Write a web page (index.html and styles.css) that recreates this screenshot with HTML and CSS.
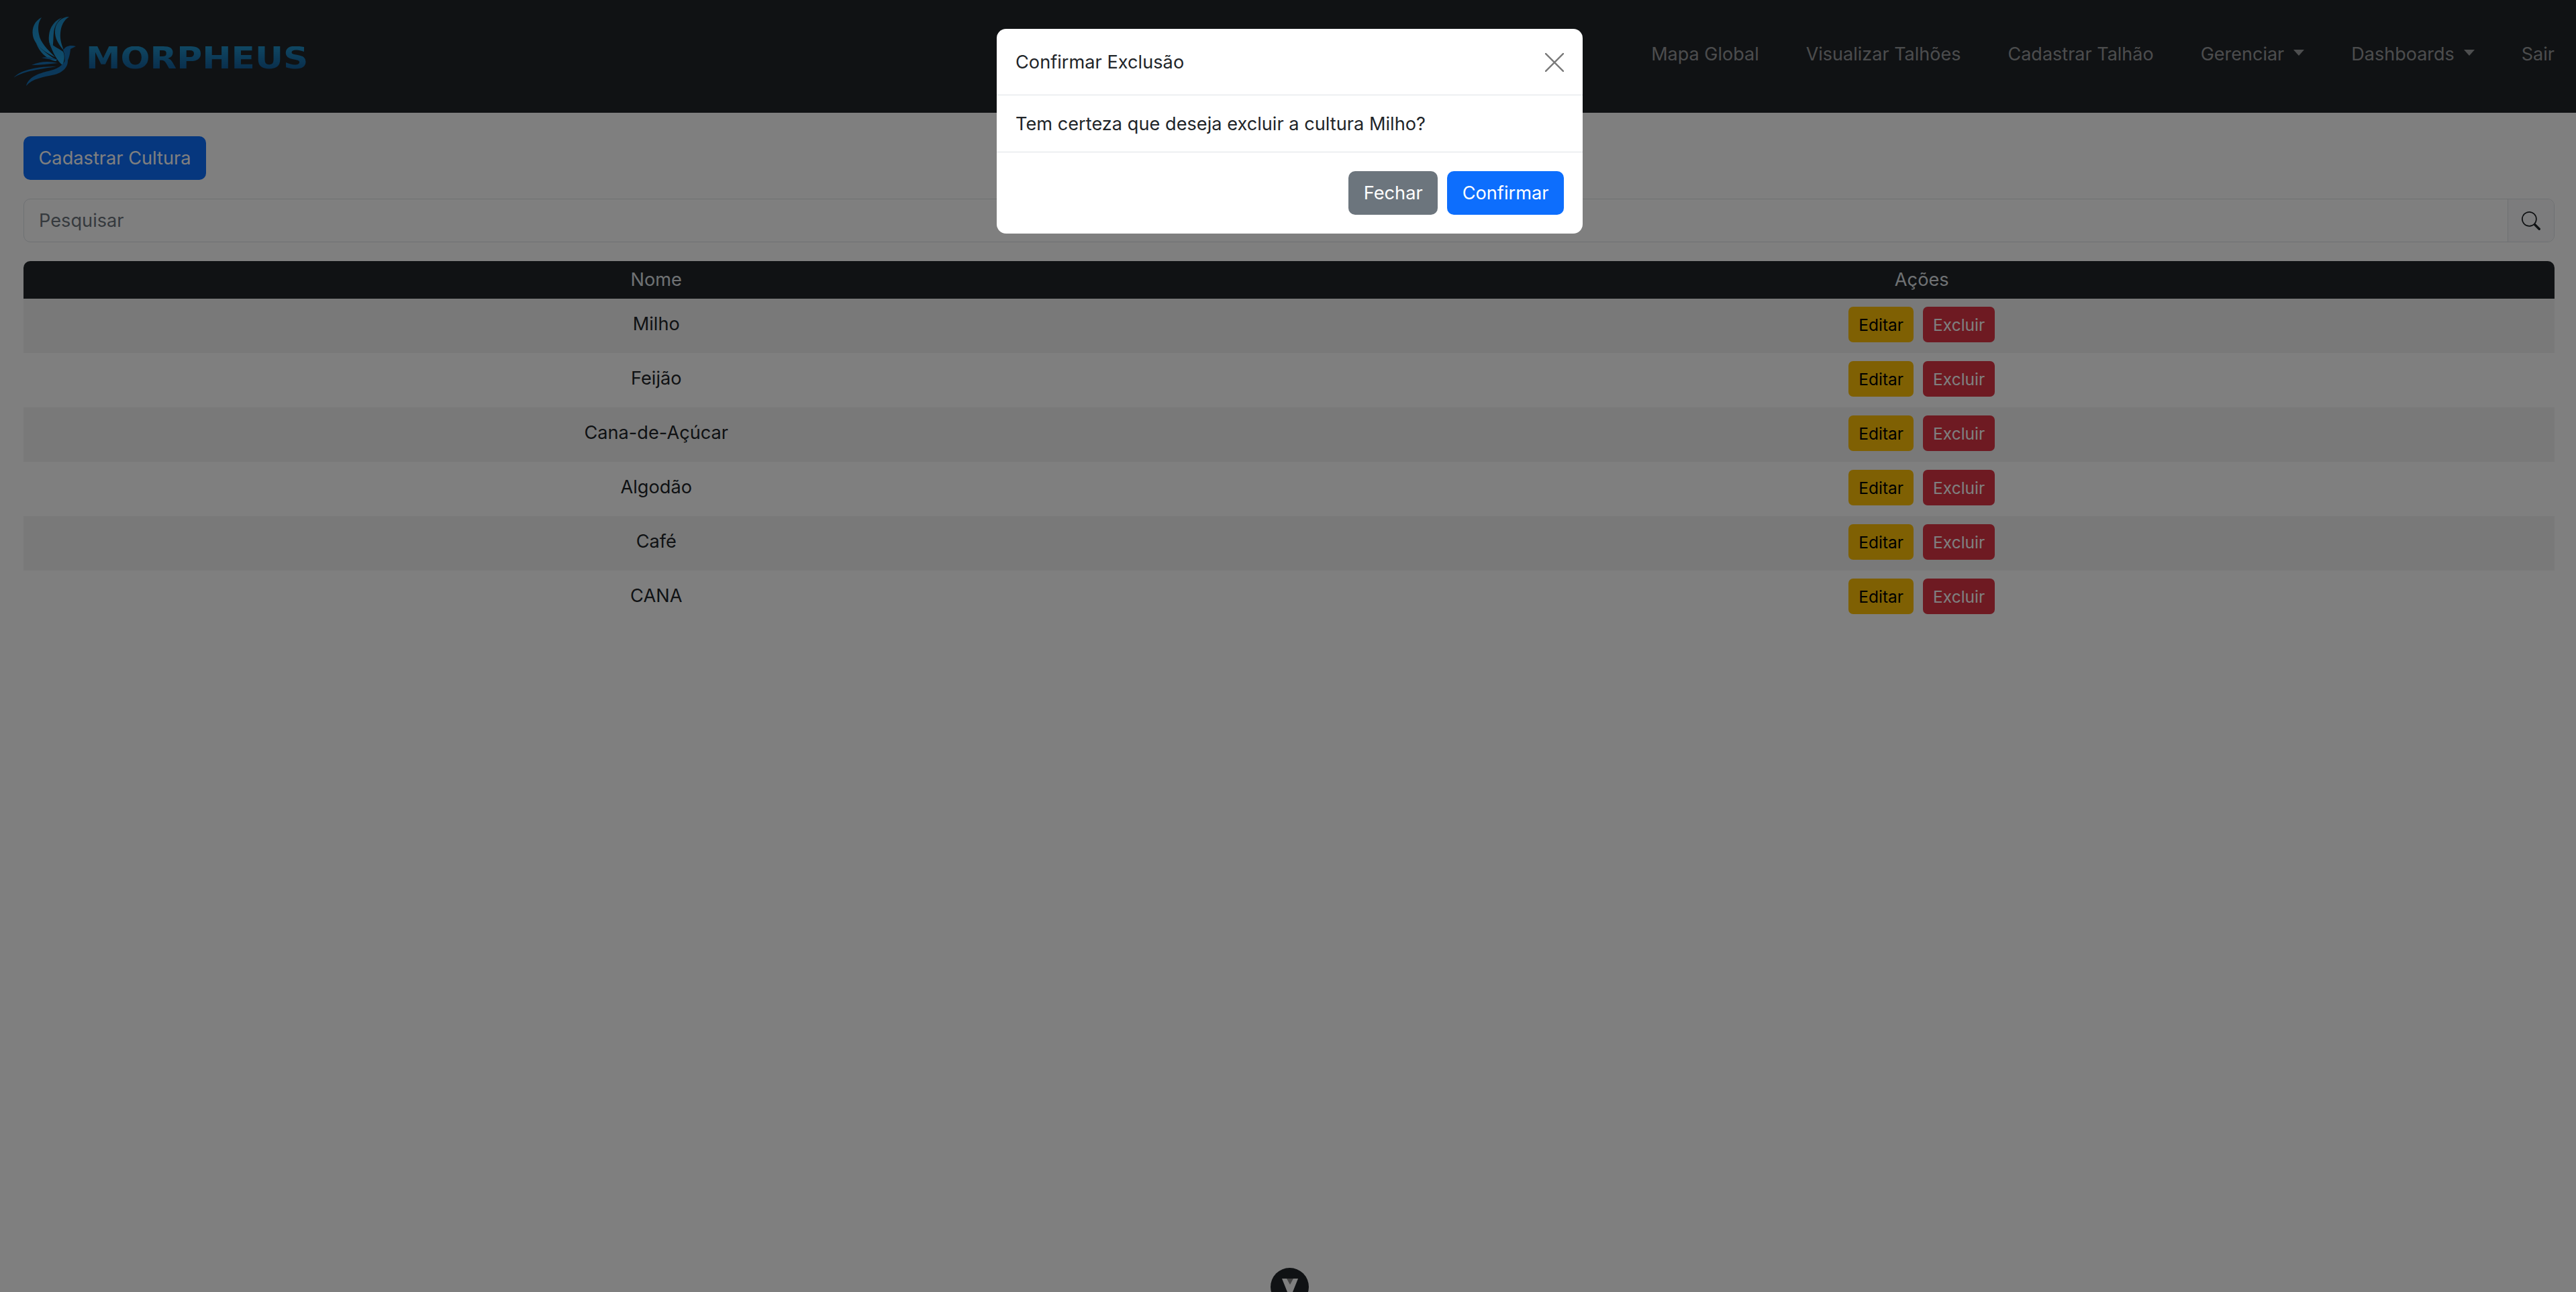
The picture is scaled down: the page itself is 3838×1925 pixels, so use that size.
FILE: index.html
```html
<!DOCTYPE html>
<html lang="pt-BR">
<head>
    <meta charset="UTF-8" />
    <title>Culturas</title>
    <link rel="stylesheet" href="styles.css">
</head>
<body>
    <nav class="navbar">
        <a class="brand" href="#">
            <svg class="brand-bird" viewBox="0 0 100 106" width="100" height="106">
                <defs>
                    <linearGradient id="birdLight" x1="0" y1="0" x2="0" y2="1">
                        <stop offset="0" stop-color="#1c8cc8" />
                        <stop offset="1" stop-color="#1f9fe0" />
                    </linearGradient>
                </defs>
                <g fill="url(#birdLight)">
                    <path d="M42 1 C32 6 27 16 29 28 C31 40 44 52 62 60 C50 48 40 38 38 26 C36 16 37 8 42 1 Z" />
                    <path d="M33 36 C38 46 50 56 64 64 C66 67 60 66 56 64 C44 58 36 48 33 36 Z" />
                    <path d="M83 0 C72 0 63 8 62 20 C61 32 68 42 75 50 C72 42 69 34 70 24 C71 13 75 5 83 0 Z" />
                    <path d="M73 1 C62 5 54 15 53 28 C52 36 54 42 58 48 C60 38 59 26 61 18 C63 11 67 5 73 1 Z" />
                    <path d="M53 36 C58 44 66 46 74 52 C77 58 76 66 73 72 C66 66 58 54 53 36 Z" />
                </g>
                <g fill="#1670b4">
                    <path d="M74 50 C78 43 85 42 93 44 L85 48 C84 58 82 66 76 72 C77 64 77 56 74 50 Z" />
                    <path d="M0 91 C12 78 38 74 64 74 C42 78 16 80 0 91 Z" />
                    <path d="M27 72 C40 66 54 66 66 69 C52 70 40 72 27 72 Z" />
                    <path d="M42 61 C50 59 58 61 66 64 C56 64 50 63 42 61 Z" />
                    <path d="M19 103 C22 90 38 84 52 81 C64 78 74 74 80 60 C84 72 76 82 62 86 C44 90 28 92 19 103 Z" />
                </g>
            </svg>
            <span class="brand-name">MORPHEUS</span>
        </a>
        <ul class="nav-links">
            <li><a href="#">Mapa Global</a></li>
            <li><a href="#">Visualizar Talhões</a></li>
            <li><a href="#">Cadastrar Talhão</a></li>
            <li><a href="#" class="dropdown-toggle">Gerenciar</a></li>
            <li><a href="#" class="dropdown-toggle">Dashboards</a></li>
            <li><a href="#">Sair</a></li>
        </ul>
    </nav>

    <main class="content">
        <button class="btn btn-primary btn-new">Cadastrar Cultura</button>

        <div class="search-group">
            <input class="search-input" type="text" placeholder="Pesquisar">
            <span class="search-addon">
                <svg viewBox="0 0 16 16" width="28" height="28" fill="#212529">
                    <path d="M11.742 10.344a6.5 6.5 0 1 0-1.397 1.398h-.001c.03.04.062.078.098.115l3.85 3.85a1 1 0 0 0 1.415-1.414l-3.85-3.85a1.007 1.007 0 0 0-.115-.1zM12 6.5a5.5 5.5 0 1 1-11 0 5.5 5.5 0 0 1 11 0z" />
                </svg>
            </span>
        </div>

        <table class="crop-table">
            <thead>
                <tr><th>Nome</th><th>Ações</th></tr>
            </thead>
            <tbody>
                <tr>
                    <td>Milho</td>
                    <td><button class="btn-sm btn-warning">Editar</button><button class="btn-sm btn-danger">Excluir</button></td>
                </tr>
                <tr>
                    <td>Feijão</td>
                    <td><button class="btn-sm btn-warning">Editar</button><button class="btn-sm btn-danger">Excluir</button></td>
                </tr>
                <tr>
                    <td>Cana-de-Açúcar</td>
                    <td><button class="btn-sm btn-warning">Editar</button><button class="btn-sm btn-danger">Excluir</button></td>
                </tr>
                <tr>
                    <td>Algodão</td>
                    <td><button class="btn-sm btn-warning">Editar</button><button class="btn-sm btn-danger">Excluir</button></td>
                </tr>
                <tr>
                    <td>Café</td>
                    <td><button class="btn-sm btn-warning">Editar</button><button class="btn-sm btn-danger">Excluir</button></td>
                </tr>
                <tr>
                    <td>CANA</td>
                    <td><button class="btn-sm btn-warning">Editar</button><button class="btn-sm btn-danger">Excluir</button></td>
                </tr>
            </tbody>
        </table>
    </main>

    <button class="scroll-toggle">
        <svg viewBox="0 0 24 30" width="24" height="30">
            <path d="M0 0 H24 L12 30 Z" fill="#fff" />
            <path d="M7 0 H17 L12 9 Z" fill="#888" />
        </svg>
    </button>

    <div class="backdrop"></div>

    <div class="modal">
        <div class="modal-header">
            <span>Confirmar Exclusão</span>
            <svg class="modal-close" viewBox="0 0 16 16" width="28" height="28">
                <path d="M.5 .5 L15.5 15.5 M15.5 .5 L.5 15.5" stroke="#7a7a7a" stroke-width="1.4" stroke-linecap="round" />
            </svg>
        </div>
        <div class="modal-body">Tem certeza que deseja excluir a cultura Milho?</div>
        <div class="modal-footer">
            <button class="btn btn-secondary">Fechar</button>
            <button class="btn btn-primary">Confirmar</button>
        </div>
    </div>
</body>
</html>
```

FILE: styles.css
```css
* {
    box-sizing: border-box;
}

html,
body {
    height: 100%;
}

body {
    margin: 0;
    overflow: hidden;
    background-color: #fff;
    color: #212529;
    font-family: "Inter", "Roboto", sans-serif;
    font-size: 27.2px;
}

.navbar {
    height: 168px;
    background-color: #212529;
    display: flex;
    justify-content: space-between;
    padding: 0 32px 0 20px;
}

.brand {
    display: flex;
    align-items: flex-start;
    text-decoration: none;
    padding-top: 25px;
}

.brand-name {
    margin: 44px 0 0 8px;
    font-family: "DejaVu Sans", sans-serif;
    font-weight: bold;
    font-size: 45px;
    line-height: 36px;
    background: linear-gradient(#1f8fc6, #125a96);
    -webkit-background-clip: text;
    background-clip: text;
    color: transparent;
    transform: scaleX(1.15);
    transform-origin: left;
}

.nav-links {
    list-style: none;
    display: flex;
    margin: 0;
    padding: 60px 0 0;
    gap: 70px;
    font-size: 27px;
}

.nav-links a {
    color: rgba(255, 255, 255, 0.55);
    text-decoration: none;
    line-height: 42px;
}

.dropdown-toggle::after {
    content: "";
    display: inline-block;
    margin-left: 14px;
    vertical-align: 7px;
    border-top: 9px solid;
    border-left: 8px solid transparent;
    border-right: 8px solid transparent;
}

.content {
    padding: 35px 32px 0 35px;
}

.btn {
    height: 65px;
    padding: 0 22.5px;
    border: none;
    border-radius: 10px;
    color: #fff;
    font: inherit;
}

.btn-primary {
    background-color: #0d6efd;
}

.btn-secondary {
    background-color: #6c757d;
}

.btn-new {
    display: block;
}

.search-group {
    display: flex;
    height: 65px;
    margin-top: 28px;
    border: 1px solid #dee2e6;
    border-radius: 10px;
}

.search-input {
    flex: 1;
    border: none;
    background: transparent;
    padding: 0 22px;
    font: inherit;
    outline: none;
}

.search-input::placeholder {
    color: #6c757d;
}

.search-addon {
    width: 69px;
    display: flex;
    align-items: center;
    justify-content: center;
    background-color: #f8f9fa;
    border-left: 1px solid #dee2e6;
    border-radius: 0 9px 9px 0;
}

.crop-table {
    width: 100%;
    margin-top: 28px;
    border-collapse: separate;
    border-spacing: 0;
    table-layout: fixed;
}

.crop-table th {
    height: 56px;
    padding: 0 0 2px;
    background-color: #212529;
    color: #dee2e6;
    font-weight: 400;
}

.crop-table th:first-child {
    border-top-left-radius: 10px;
    width: 50%;
}

.crop-table th:last-child {
    border-top-right-radius: 10px;
}

.crop-table td {
    height: 81px;
    padding: 0 0 6px;
    text-align: center;
}

.crop-table td:last-child {
    padding: 0 0 4px;
}

.crop-table tbody tr:nth-child(odd) td {
    background-color: #f2f2f2;
}

.btn-sm {
    height: 53px;
    padding: 0 15px;
    border: none;
    border-radius: 7px;
    font: inherit;
    font-size: 24.5px;
    vertical-align: middle;
}

.btn-warning {
    background-color: #ffc107;
    color: #000;
}

.btn-danger {
    margin-left: 14px;
    background-color: #dc3545;
    color: #fff;
}

.scroll-toggle {
    position: fixed;
    left: 1893px;
    top: 1889px;
    width: 57px;
    height: 57px;
    padding: 16px 0 0;
    border: none;
    border-radius: 50%;
    background-color: #212529;
    display: flex;
    justify-content: center;
    align-items: flex-start;
}

.backdrop {
    position: fixed;
    inset: 0;
    background-color: rgba(0, 0, 0, 0.5);
}

.modal {
    position: fixed;
    left: 1485px;
    top: 43px;
    width: 873px;
    height: 305px;
    background-color: #fff;
    border-radius: 14px;
}

.modal-header {
    height: 99px;
    padding: 1px 28px 0;
    display: flex;
    align-items: center;
    justify-content: space-between;
    border-bottom: 1px solid #dee2e6;
}

.modal-body {
    height: 85px;
    padding: 0 28px;
    display: flex;
    align-items: center;
    border-bottom: 1px solid #dee2e6;
}

.modal-footer {
    display: flex;
    justify-content: flex-end;
    gap: 14px;
    padding: 28px 28px 0;
}
```
